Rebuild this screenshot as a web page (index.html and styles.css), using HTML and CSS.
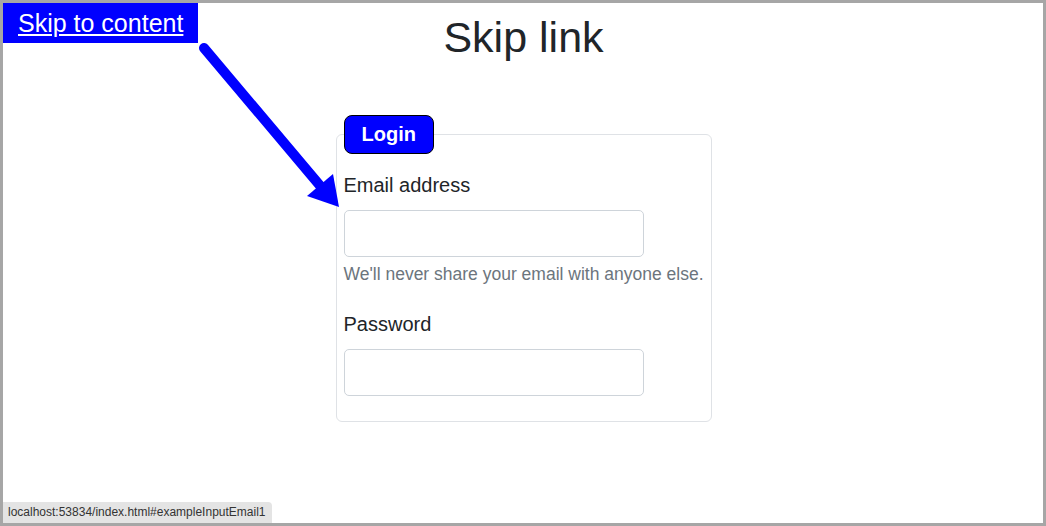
FILE: index.html
```html
<!DOCTYPE html>
<html lang="en">
<head>
<meta charset="utf-8">
<title>Skip link</title>
<link rel="stylesheet" href="styles.css">
</head>
<body>
<div class="frame">
  <a class="skip-link" href="#exampleInputEmail1">Skip to content</a>
  <main class="page">
    <h1 class="title">Skip link</h1>
    <form class="login-form">
      <fieldset class="login-box">
        <legend class="login-legend">Login</legend>
        <div class="field">
          <label class="field-label" for="exampleInputEmail1">Email address</label>
          <input class="field-input" type="email" id="exampleInputEmail1">
          <div class="field-help">We'll never share your email with anyone else.</div>
        </div>
        <div class="field field-last">
          <label class="field-label" for="exampleInputPassword1">Password</label>
          <input class="field-input" type="password" id="exampleInputPassword1">
        </div>
      </fieldset>
    </form>
  </main>
  <svg class="arrow" width="1046" height="526" viewBox="0 0 1046 526" aria-hidden="true">
    <line x1="204" y1="48" x2="322" y2="188" stroke="#0000ff" stroke-width="10" stroke-linecap="round"/>
    <polygon points="307,196 333,174 339,207" fill="#0000ff"/>
  </svg>
  <div class="status-bar">localhost:53834/index.html#exampleInputEmail1</div>
</div>
</body>
</html>
```
FILE: styles.css
```css
* { box-sizing: border-box; }
html, body { margin: 0; padding: 0; }
body {
  font-family: "Liberation Sans", Arial, sans-serif;
  color: #212529;
  background: #fff;
}
.frame {
  position: relative;
  width: 1046px;
  height: 526px;
  border: 3px solid #a6a6a6;
  overflow: hidden;
  background: #fff;
}
.skip-link {
  position: absolute;
  left: 0;
  top: 0;
  display: block;
  background: #0000ff;
  color: #fff;
  font-size: 25px;
  line-height: 28px;
  padding: 6px 15px;
  text-decoration: underline;
  text-underline-offset: 2px;
  z-index: 2;
}
.page {
  padding-top: 8px;
  padding-left: 1px;
  display: flex;
  flex-direction: column;
  align-items: center;
}
.title {
  margin: 0;
  font-size: 43px;
  font-weight: 400;
  line-height: 52px;
  text-align: center;
}
.login-form { margin-top: 52px; }
.login-box {
  width: 375px;
  margin: 0;
  padding: 15px 7px 25px;
  border: 1px solid #dfe2e6;
  border-radius: 6px;
}
.login-legend {
  margin-left: 0;
  padding: 7px 17px;
  background: #0000ff;
  color: #fff;
  font-weight: 700;
  font-size: 20px;
  line-height: 23px;
  border: 1px solid #000;
  border-radius: 8px;
}
.field { margin-bottom: 20px; }
.field-last { margin-bottom: 0; }
.field-label {
  display: block;
  font-size: 20px;
  line-height: 32px;
  margin-bottom: 9px;
}
.field-input {
  display: block;
  width: 300px;
  height: 47px;
  border: 1px solid #ced4da;
  border-radius: 5px;
  background: #fff;
  font-size: 20px;
  padding: 6px 12px;
}
.field-help {
  margin-top: 4px;
  font-size: 17.5px;
  line-height: 27px;
  color: #6c757d;
  white-space: nowrap;
}
.arrow {
  position: absolute;
  left: -3px;
  top: -3px;
  pointer-events: none;
  z-index: 3;
}
.status-bar {
  position: absolute;
  left: 0;
  bottom: 0;
  height: 21px;
  padding: 0 6px 0 5px;
  background: #e4e4e4;
  border-top-right-radius: 4px;
  font-family: "Liberation Sans", Arial, sans-serif;
  font-size: 12px;
  line-height: 21px;
  color: #333;
  z-index: 4;
}
```
